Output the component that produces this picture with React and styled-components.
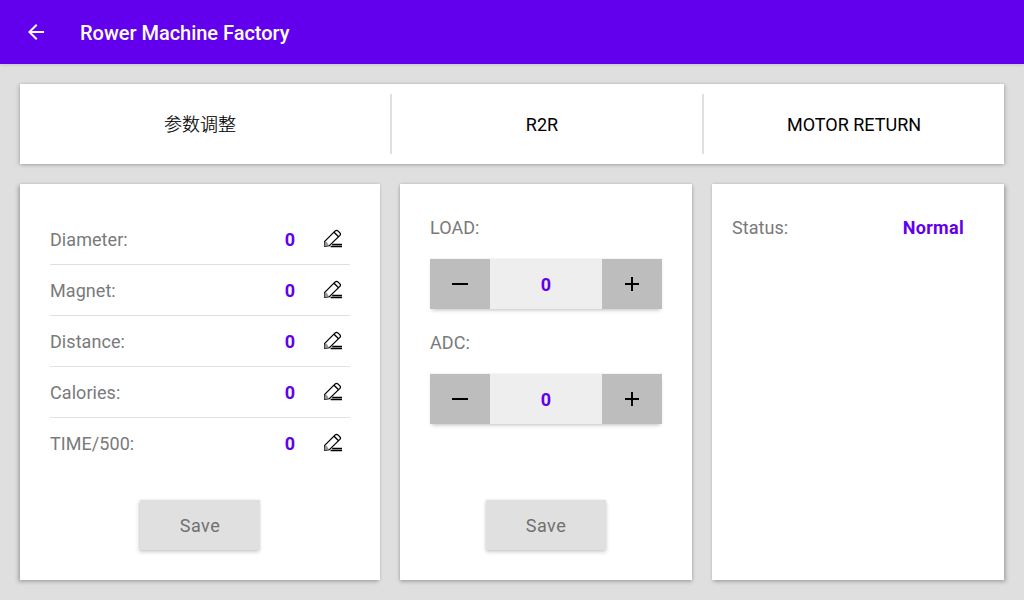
import React from "react";
import styled, { createGlobalStyle } from "styled-components";

const Global = createGlobalStyle`
  * { box-sizing: border-box; }
  body {
    margin: 0;
    background: #dfdfdf;
    font-family: Roboto, "Noto Sans CJK SC", sans-serif;
    font-size: 18px;
    color: #000;
  }
  button { font: inherit; color: inherit; border: 0; padding: 0; }
`;

const Screen = styled.div`
  width: 1024px;
  height: 600px;
  overflow: hidden;
  display: flex;
  flex-direction: column;
`;

const AppBar = styled.header`
  height: 64px;
  flex: none;
  display: flex;
  align-items: center;
  gap: 32px;
  padding: 0 24px;
  background: #6200ee;
  color: #fff;
  box-shadow: 0 1px 3px rgba(0, 0, 0, 0.12);
`;

const Title = styled.h1`
  margin: 0;
  padding-top: 2px;
  font-size: 20px;
  font-weight: 500;
  line-height: 24px;
  letter-spacing: -0.02px;
`;

const Glyph = styled.svg`
  display: block;
  width: 24px;
  height: 24px;
  fill: currentColor;
`;

const Content = styled.main`
  flex: 1;
  display: flex;
  flex-direction: column;
  gap: 20px;
  padding: 20px;
`;

const Card = styled.section`
  background: #fff;
  box-shadow:
    ${(p) => p.$lean || 0}px 2px 4px rgba(0, 0, 0, 0.22),
    0 0 3px rgba(0, 0, 0, 0.14);
`;

const TabBar = styled(Card)`
  height: 80px;
  display: flex;
  align-items: center;
  box-shadow:
    -2px 1px 4px rgba(0, 0, 0, 0.13),
    2px 1px 4px rgba(0, 0, 0, 0.13),
    0 0 2px rgba(0, 0, 0, 0.12);
`;

const Tab = styled.button`
  width: ${(p) => p.$width}px;
  height: 80px;
  padding-top: 1px;
  background: none;
  line-height: 22px;
`;

const LightTab = styled(Tab)`
  padding-top: 2px;
  font-weight: 300;
  -webkit-text-stroke: 0.2px #000;
`;

const Separator = styled.div`
  width: 2px;
  height: 60px;
  margin-left: 10px;
  background: #e0e0e0;
`;

const Columns = styled.div`
  flex: 1;
  display: grid;
  grid-template-columns: 360px 292px 292px;
  gap: 20px;
`;

const Panel = styled(Card)`
  display: flex;
  flex-direction: column;
  padding: ${(p) => p.$padding};
`;

const Row = styled.div`
  display: flex;
  align-items: center;
  height: 51px;
  border-bottom: 1px solid #e0e0e0;
  &:last-of-type { border-bottom-color: transparent; }
`;

const Label = styled.span`
  flex: 1;
  padding-top: 2px;
  line-height: 22px;
  color: #7a7a7a;
  letter-spacing: 0.06px;
`;

const Value = styled.span`
  padding-top: 2px;
  line-height: 22px;
  font-weight: 700;
  color: #6200ee;
  letter-spacing: ${(p) => p.$spacing || "0"};
`;

const EditButton = styled.button`
  width: 34px;
  height: 50px;
  margin-left: 21px;
  display: flex;
  align-items: center;
  justify-content: center;
  background: none;
`;

const SaveButton = styled.button`
  width: 120px;
  height: 50px;
  margin: auto auto 0;
  padding-top: 1px;
  line-height: 22px;
  background: #e0e0e0;
  color: #707070;
  letter-spacing: 0.45px;
  box-shadow:
    ${(p) => p.$lean || 0}px 2px 4px rgba(0, 0, 0, 0.2),
    0 0 2px rgba(0, 0, 0, 0.08);
`;

const Field = styled.div`
  display: flex;
  flex-direction: column;
  gap: 20px;
  margin-bottom: 21px;
`;

const Stepper = styled.div`
  display: flex;
  align-items: stretch;
  height: 50px;
  background: #eeeeee;
  box-shadow: 0 3px 4px -2px rgba(0, 0, 0, 0.26), 0 -1px 1px rgba(0, 0, 0, 0.04);
`;

const StepButton = styled.button`
  width: 60px;
  display: flex;
  align-items: center;
  justify-content: center;
  background: #bdbdbd;
`;

const StepValue = styled.div`
  flex: 1;
  display: flex;
  align-items: center;
  justify-content: center;
`;

const StatusLine = styled.div`
  display: flex;
  align-items: center;
`;

function PencilIcon() {
  return (
    <svg width="20" height="20" viewBox="0 0 20 20" fill="none" stroke="#000" strokeWidth="1.3">
      <path
        d="M1.6 17.3 L1.7 12.4 L12.2 1.9 Q13.6 0.8 14.9 1.9 L16.9 3.9 Q18 5.2 16.9 6.4 L6.4 16.6 Z"
        strokeLinejoin="round"
      />
      <path d="M11 3.2 L15.6 7.7" />
      <path d="M1.9 12.9 L4 13.4 L4.3 14.6 L5.6 16.6 L1.6 17.3 Z" fill="#999" stroke="#777" strokeWidth="0.5" />
      <path d="M9.2 15.5 H19 M7.6 17.5 H19" strokeWidth="1.6" />
    </svg>
  );
}

function StepperField({ label, value }) {
  return (
    <Field>
      <Label>{label}</Label>
      <Stepper>
        <StepButton aria-label={`Decrease ${label}`}>
          <Glyph viewBox="0 0 24 24"><path d="M4 11h16v2H4z" /></Glyph>
        </StepButton>
        <StepValue><Value>{value}</Value></StepValue>
        <StepButton aria-label={`Increase ${label}`}>
          <Glyph viewBox="0 0 24 24"><path d="M19 13h-6v6h-2v-6H5v-2h6V5h2v6h6z" /></Glyph>
        </StepButton>
      </Stepper>
    </Field>
  );
}

const parameters = ["Diameter:", "Magnet:", "Distance:", "Calories:", "TIME/500:"];

export default function App() {
  return (
    <Screen>
      <Global />
      <AppBar>
        <Glyph viewBox="0 0 24 24">
          <path d="M20 11H7.83l5.59-5.59L12 4l-8 8 8 8 1.41-1.41L7.83 13H20v-2z" />
        </Glyph>
        <Title>Rower Machine Factory</Title>
      </AppBar>
      <Content>
        <TabBar>
          <LightTab $width={360}>参数调整</LightTab>
          <Separator />
          <Tab $width={300}>R2R</Tab>
          <Separator />
          <Tab $width={300}>MOTOR RETURN</Tab>
        </TabBar>
        <Columns>
          <Panel $padding="30px" $lean={-2}>
            {parameters.map((name) => (
              <Row key={name}>
                <Label>{name}</Label>
                <Value>0</Value>
                <EditButton aria-label={`Edit ${name}`}><PencilIcon /></EditButton>
              </Row>
            ))}
            <SaveButton $lean={-1}>Save</SaveButton>
          </Panel>
          <Panel $padding="31px 30px 30px">
            <StepperField label="LOAD:" value={0} />
            <StepperField label="ADC:" value={0} />
            <SaveButton>Save</SaveButton>
          </Panel>
          <Panel $padding="31px 40px 30px 20px" $lean={2}>
            <StatusLine>
              <Label>Status:</Label>
              <Value $spacing="0.3px">Normal</Value>
            </StatusLine>
          </Panel>
        </Columns>
      </Content>
    </Screen>
  );
}
